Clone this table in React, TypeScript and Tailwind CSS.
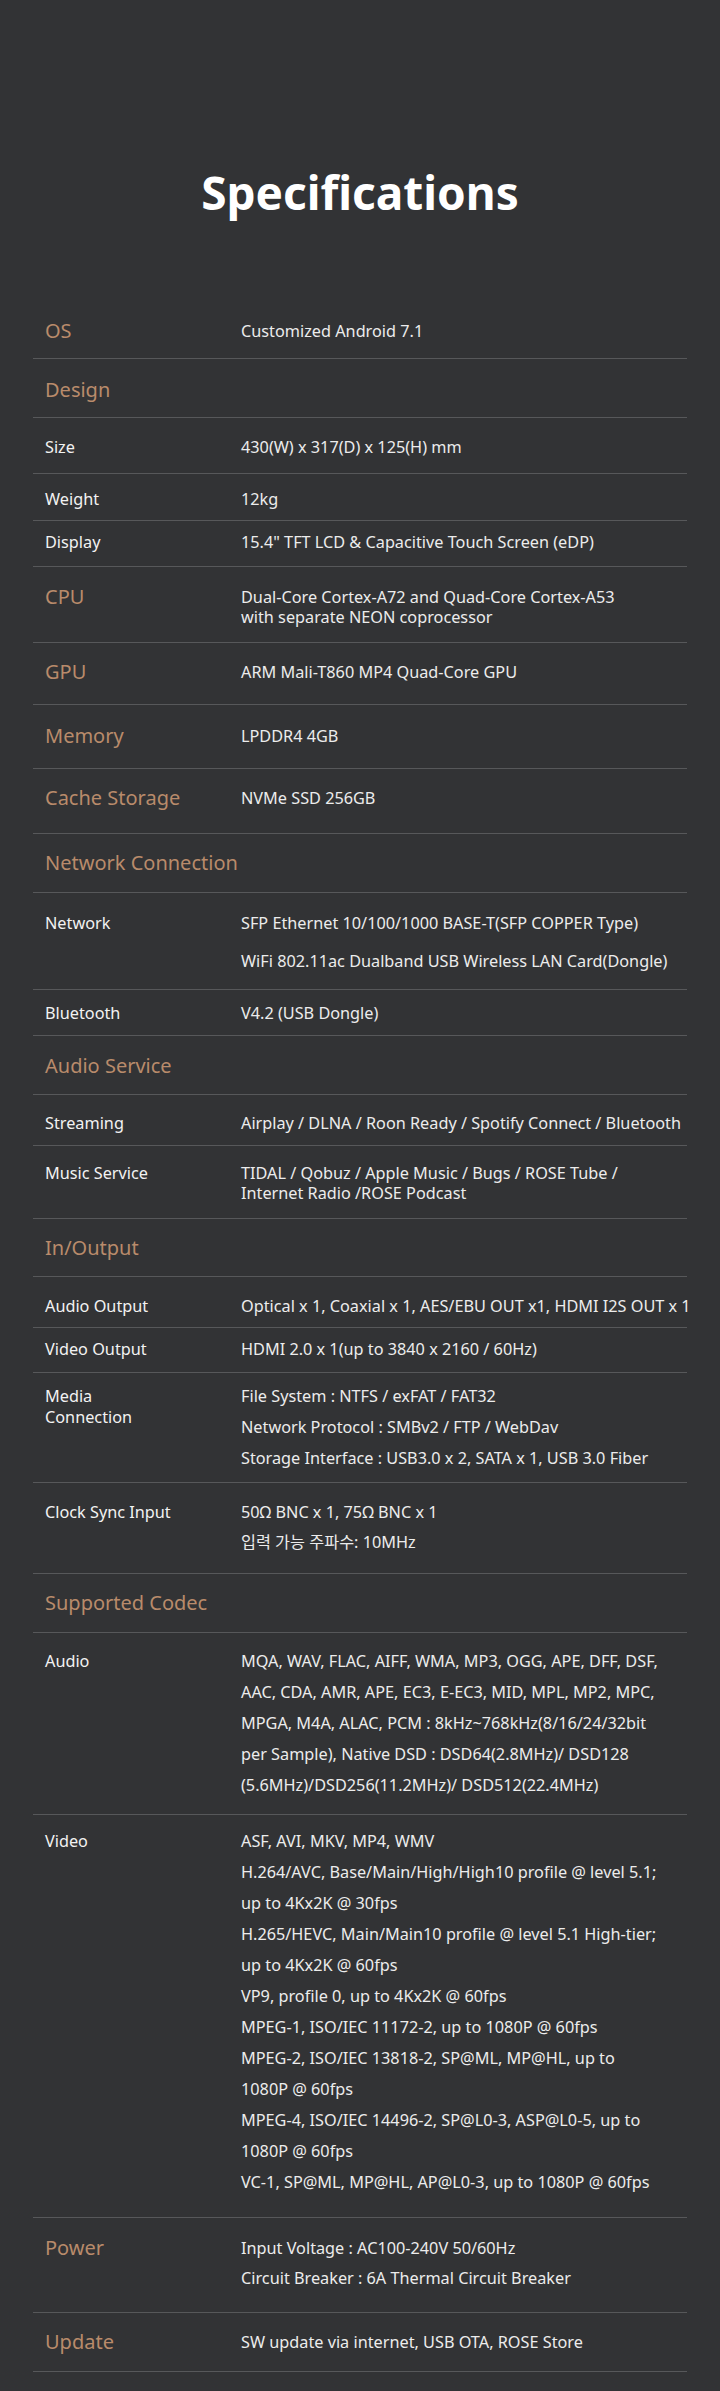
const rows: {
  label: string[];
  head?: boolean;
  values: string[];
  pad: string;
  gap?: string;
  tall?: boolean;
}[] = [
  { label: ['OS'], head: true, values: ['Customized Android 7.1'], pad: 'pt-[21px] pb-[17px]' },
  { label: ['Design'], head: true, values: [], pad: 'pt-[21px] pb-[17px]' },
  { label: ['Size'], values: ['430(W) x 317(D) x 125(H) mm'], pad: 'pt-[19px] pb-[16px]' },
  { label: ['Weight'], values: ['12kg'], pad: 'pt-[15px] pb-[11px]' },
  { label: ['Display'], values: ['15.4" TFT LCD & Capacitive Touch Screen (eDP)'], pad: 'pt-[11px] pb-[14px]' },
  {
    label: ['CPU'],
    head: true,
    values: ['Dual-Core Cortex-A72 and Quad-Core Cortex-A53', 'with separate NEON coprocessor'],
    pad: 'pt-[20px] pb-[15px]',
  },
  { label: ['GPU'], head: true, values: ['ARM Mali-T860 MP4 Quad-Core GPU'], pad: 'pt-[19px] pb-[22px]' },
  { label: ['Memory'], head: true, values: ['LPDDR4 4GB'], pad: 'pt-[21px] pb-[22px]' },
  { label: ['Cache Storage'], head: true, values: ['NVMe SSD 256GB'], pad: 'pt-[19px] pb-[25px]' },
  { label: ['Network Connection'], head: true, values: [], pad: 'pt-[19px] pb-[19px]' },
  {
    label: ['Network'],
    values: ['SFP Ethernet 10/100/1000 BASE-T(SFP COPPER Type)', 'WiFi 802.11ac Dualband USB Wireless LAN Card(Dongle)'],
    pad: 'pt-[20px] pb-[18px]',
    gap: 'gap-[18px]',
  },
  { label: ['Bluetooth'], values: ['V4.2 (USB Dongle)'], pad: 'pt-[13px] pb-[12px]' },
  { label: ['Audio Service'], head: true, values: [], pad: 'pt-[20px] pb-[18px]' },
  {
    label: ['Streaming'],
    values: ['Airplay / DLNA / Roon Ready / Spotify Connect / Bluetooth'],
    pad: 'pt-[18px] pb-[12px]',
  },
  {
    label: ['Music Service'],
    values: ['TIDAL / Qobuz / Apple Music / Bugs / ROSE Tube /', 'Internet Radio /ROSE Podcast'],
    pad: 'pt-[17px] pb-[15px]',
  },
  { label: ['In/Output'], head: true, values: [], pad: 'pt-[19px] pb-[18px]' },
  {
    label: ['Audio Output'],
    values: ['Optical x 1, Coaxial x 1, AES/EBU OUT x1, HDMI I2S OUT x 1'],
    pad: 'pt-[19px] pb-[11px]',
  },
  { label: ['Video Output'], values: ['HDMI 2.0 x 1(up to 3840 x 2160 / 60Hz)'], pad: 'pt-[11px] pb-[13px]' },
  {
    label: ['Media', 'Connection'],
    values: [
      'File System : NTFS / exFAT / FAT32',
      'Network Protocol : SMBv2 / FTP / WebDav',
      'Storage Interface : USB3.0 x 2, SATA x 1, USB 3.0 Fiber',
    ],
    pad: 'pt-[13px] pb-[14px]',
    gap: 'gap-[11px]',
  },
  {
    label: ['Clock Sync Input'],
    values: ['50Ω BNC x 1, 75Ω BNC x 1', '입력 가능 주파수: 10MHz'],
    pad: 'pt-[19px] pb-[21px]',
    gap: 'gap-[10px]',
  },
  { label: ['Supported Codec'], head: true, values: [], pad: 'pt-[19px] pb-[19px]' },
  {
    label: ['Audio'],
    tall: true,
    values: [
      'MQA, WAV, FLAC, AIFF, WMA, MP3, OGG, APE, DFF, DSF,',
      'AAC, CDA, AMR, APE, EC3, E-EC3, MID, MPL, MP2, MPC,',
      'MPGA, M4A, ALAC, PCM : 8kHz~768kHz(8/16/24/32bit',
      'per Sample), Native DSD : DSD64(2.8MHz)/ DSD128',
      '(5.6MHz)/DSD256(11.2MHz)/ DSD512(22.4MHz)',
    ],
    pad: 'pt-[13px] pb-[13px]',
  },
  {
    label: ['Video'],
    tall: true,
    values: [
      'ASF, AVI, MKV, MP4, WMV',
      'H.264/AVC, Base/Main/High/High10 profile @ level 5.1;',
      'up to 4Kx2K @ 30fps',
      'H.265/HEVC, Main/Main10 profile @ level 5.1 High-tier;',
      'up to 4Kx2K @ 60fps',
      'VP9, profile 0, up to 4Kx2K @ 60fps',
      'MPEG-1, ISO/IEC 11172-2, up to 1080P @ 60fps',
      'MPEG-2, ISO/IEC 13818-2, SP@ML, MP@HL, up to',
      '1080P @ 60fps',
      'MPEG-4, ISO/IEC 14496-2, SP@L0-3, ASP@L0-5, up to',
      '1080P @ 60fps',
      'VC-1, SP@ML, MP@HL, AP@L0-3, up to 1080P @ 60fps',
    ],
    pad: 'pt-[11px] pb-[19px]',
  },
  {
    label: ['Power'],
    head: true,
    values: ['Input Voltage : AC100-240V 50/60Hz', 'Circuit Breaker : 6A Thermal Circuit Breaker'],
    pad: 'pt-[20px] pb-[24px]',
    gap: 'gap-[10px]',
  },
  {
    label: ['Update'],
    head: true,
    values: ['SW update via internet, USB OTA, ROSE Store'],
    pad: 'pt-[19px] pb-[19px]',
  },
];

export default function App() {
  return (
    <div
      className="min-h-screen bg-[#323335] px-[33px] pt-[169px] pb-[18px] text-[#ececec]"
      style={{ fontFamily: '"Noto Sans", "Noto Sans CJK KR", sans-serif' }}
    >
      <h1 className="text-center text-[46px] leading-[46px] font-bold text-white">Specifications</h1>

      <div className="mt-[85px]">
        {rows.map((row, i) => (
          <div
            key={i}
            className={`flex items-start px-3 ${row.pad} ${i === 0 ? '' : 'border-t border-[#57585a]'} ${
              i === rows.length - 1 ? 'border-b border-[#57585a]' : ''
            }`}
          >
            <div
              className={`w-[196px] shrink-0 ${
                row.head ? 'text-[20px] text-[#b98b6b]' : 'text-[16.25px] text-[#f2f2f2]'
              } ${row.tall ? 'leading-[31px]' : row.label.length > 1 ? 'leading-[21px]' : 'leading-[20px]'}`}
            >
              {row.label.map((l) => (
                <div key={l}>{l}</div>
              ))}
            </div>
            <div
              className={`flex flex-col whitespace-nowrap text-[16.25px] ${
                row.tall ? 'leading-[31px]' : 'leading-[20px]'
              } ${row.gap ?? ''}`}
            >
              {row.values.map((v) => (
                <div key={v}>{v}</div>
              ))}
              {row.values.length === 0 && <div>&nbsp;</div>}
            </div>
          </div>
        ))}
      </div>
    </div>
  );
}
